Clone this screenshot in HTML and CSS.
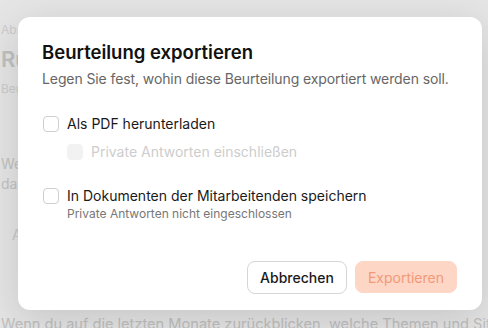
FILE: index.html
```html
<!DOCTYPE html>
<html lang="de">
<head>
    <meta charset="UTF-8">
    <meta name="viewport" content="width=device-width, initial-scale=1.0">
    <title>Beurteilung exportieren</title>
    <link rel="stylesheet" href="styles.css">
</head>
<body>
    <div class="page">
        <div class="crumb">Abschluss</div>
        <div class="page-title">Rückblick</div>
        <div class="page-sub">Beurteilung</div>
        <div class="page-text">Welche Ziele hast du erreicht und was<br>das Team</div>
        <div class="page-box">Antwort</div>
        <div class="page-question">Wenn du auf die letzten Monate zurückblicken, welche Themen und Situationen</div>
    </div>

    <div class="overlay">
        <div class="dialog">
            <h1>Beurteilung exportieren</h1>
            <p class="lead">Legen Sie fest, wohin diese Beurteilung exportiert werden soll.</p>

            <div class="options">
                <label class="option">
                    <span class="box"></span>
                    <span>Als PDF herunterladen</span>
                </label>
                <label class="option sub disabled">
                    <span class="box"></span>
                    <span>Private Antworten einschließen</span>
                </label>
                <label class="option docs">
                    <span class="box"></span>
                    <span>In Dokumenten der Mitarbeitenden speichern</span>
                </label>
                <div class="hint">Private Antworten nicht eingeschlossen</div>
            </div>

            <div class="actions">
                <button class="btn">Abbrechen</button>
                <button class="btn primary">Exportieren</button>
            </div>
        </div>
    </div>
</body>
</html>
```

FILE: styles.css
```css
body {
    margin: 0;
    font-family: Inter, "Noto Sans", sans-serif;
    background: #fff;
    overflow: hidden;
    width: 488px;
    height: 328px;
}

.page {
    width: 488px;
    overflow: hidden;
    padding: 22px 0 0 1px;
    box-sizing: border-box;
    white-space: nowrap;
}

.crumb {
    font-size: 12px;
    color: #e4e4e4;
}

.page-title {
    margin-top: 9px;
    font-size: 22px;
    font-weight: 600;
    color: #d6d6d6;
}

.page-sub {
    margin-top: 9px;
    font-size: 12px;
    color: #e4e4e4;
}

.page-text {
    margin-top: 58px;
    font-size: 14px;
    line-height: 20px;
    color: #d8d8d8;
}

.page-box {
    margin-top: 32px;
    padding-left: 11px;
    font-size: 14px;
    color: #e0e0e0;
}

.page-question {
    margin-top: 72px;
    font-size: 14.6px;
    color: #d6d6d6;
}

.overlay {
    position: absolute;
    inset: 0;
    background: rgba(0, 0, 0, 0.1);
}

.dialog {
    position: absolute;
    left: 18px;
    top: 17px;
    width: 464px;
    height: 293px;
    box-sizing: border-box;
    padding: 22px 25px 16px 24px;
    background: #fff;
    border-radius: 12px;
    box-shadow: 0 10px 40px rgba(0, 0, 0, 0.14);
    display: flex;
    flex-direction: column;
}

h1 {
    margin: 0;
    font-size: 18.5px;
    line-height: 26px;
    font-weight: 600;
    color: #111;
}

.lead {
    margin: 4px 0 0;
    font-size: 14px;
    line-height: 20px;
    letter-spacing: -0.1px;
    color: #666;
}

.options {
    margin-top: 25px;
}

.option {
    display: flex;
    align-items: center;
    gap: 8px;
    font-size: 14px;
    line-height: 20px;
    color: #1a1a1a;
}

.box {
    width: 16px;
    height: 16px;
    box-sizing: border-box;
    border: 1px solid #cfcfcf;
    border-radius: 4px;
    background: #fff;
    flex: none;
    margin-left: 1px;
}

.option.sub {
    margin: 8px 0 0 24px;
}

.option.disabled {
    color: #cdcdcd;
}

.option.disabled .box {
    background: #f2f2f2;
    border-color: #f2f2f2;
}

.option.docs {
    margin-top: 24px;
}

.hint {
    margin: 0 0 0 25px;
    font-size: 12px;
    line-height: 16px;
    color: #777;
}

.actions {
    margin-top: auto;
    display: flex;
    justify-content: flex-end;
    gap: 8px;
}

.btn {
    font-family: inherit;
    font-size: 14px;
    font-weight: 500;
    height: 33px;
    padding: 0 12px;
    border-radius: 8px;
    border: 1px solid #d6d6d6;
    background: #fff;
    color: #1a1a1a;
}

.btn.primary {
    height: 32px;
    border-color: #fdd6c6;
    background: #fdd6c6;
    color: #f29a78;
    font-weight: 400;
}
```
